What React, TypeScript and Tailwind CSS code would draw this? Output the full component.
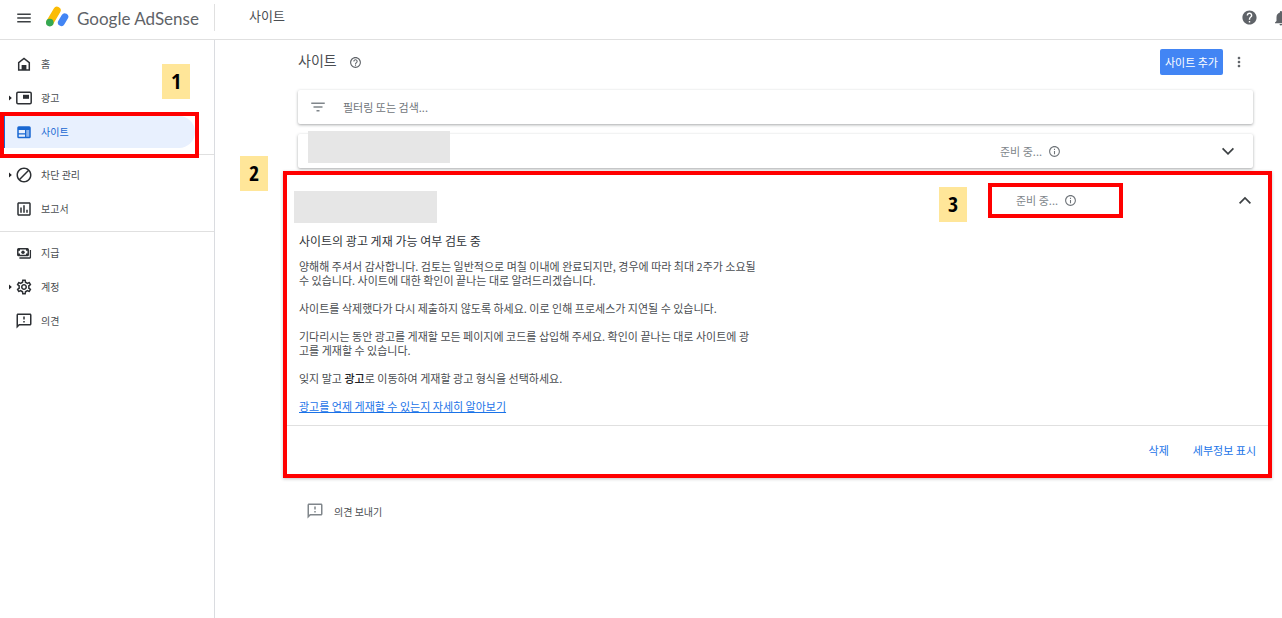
import type { ReactNode } from "react";
import {
  MdBlock,
  MdFilterList,
  MdHelp,
  MdHelpOutline,
  MdMenu,
  MdMoreVert,
  MdNotifications,
  MdOutlineFeedback,
  MdOutlineInfo,
  MdOutlineInsertChart,
  MdOutlineSettings,
} from "react-icons/md";

function HomeIcon() {
  return (
    <svg viewBox="0 0 16 16" className="size-4" fill="none" stroke="currentColor" strokeWidth="1.5">
      <path d="M2.7 14V6.6L8 2.4l5.3 4.2V14z" />
      <path d="M5.6 9h4.8v5H5.6z" fill="currentColor" stroke="none" />
    </svg>
  );
}

function AdsIcon() {
  return (
    <svg viewBox="0 0 16 14" className="h-3.5 w-4" fill="none">
      <rect x="0.8" y="1.3" width="14.4" height="11.4" rx="1.2" stroke="currentColor" strokeWidth="1.5" />
      <rect x="7" y="3.8" width="6" height="4" fill="currentColor" />
    </svg>
  );
}

function SitesIcon() {
  return (
    <svg viewBox="0 0 16 16" className="size-4" fill="none">
      <rect x="2" y="2.9" width="12" height="10.6" rx="0.8" stroke="currentColor" strokeWidth="1.5" />
      <path d="M2 3h12v3H2zM2 9.2h7.5v1.2H2zM9 6h1.4v7H9z" fill="currentColor" />
      <path d="M10.4 6H14v7h-3.6z" fill="currentColor" opacity="0.45" />
    </svg>
  );
}

function PaymentsIcon() {
  return (
    <svg viewBox="0 0 16 16" className="size-4" fill="none" stroke="currentColor">
      <rect x="1.8" y="3.8" width="10.4" height="6.8" rx="0.8" strokeWidth="1.5" />
      <circle cx="7" cy="7.2" r="1.7" fill="currentColor" stroke="none" />
      <path d="M2 3.8h2v2H2zM10 3.8h2v2h-2zM2 8.6h2v2H2zM10 8.6h2v2h-2z" fill="currentColor" stroke="none" />
      <path d="M14.4 5v7.6q0 .4-.4.4H3.4" strokeWidth="1.3" />
    </svg>
  );
}

function Chevron({ up }: { up?: boolean }) {
  return (
    <svg viewBox="0 0 14 14" className="size-3.5" fill="none" stroke="currentColor" strokeWidth="1.7">
      <path d={up ? "M1.6 10.3 7 4.9l5.4 5.4" : "M1.6 4.4 7 9.8l5.4-5.4"} />
    </svg>
  );
}

function Logo() {
  return (
    <svg viewBox="0 0 24 22" className="h-[22px] w-6" aria-hidden="true">
      <path d="M5 16.2 12 4.4" stroke="#fbbc04" strokeWidth="7.4" strokeLinecap="round" />
      <circle cx="4.8" cy="16.6" r="3.8" fill="#34a853" />
      <path d="M16.4 16.6 19.8 10.8" stroke="#4285f4" strokeWidth="7" strokeLinecap="round" />
    </svg>
  );
}

type NavItem = { label: string; icon: ReactNode; expandable?: boolean; active?: boolean };

const sections: NavItem[][] = [
  [
    { label: "홈", icon: <HomeIcon /> },
    { label: "광고", icon: <AdsIcon />, expandable: true },
    { label: "사이트", icon: <SitesIcon />, active: true },
  ],
  [
    { label: "차단 관리", icon: <MdBlock className="size-[18px] shrink-0" />, expandable: true },
    { label: "보고서", icon: <MdOutlineInsertChart className="size-[18px] shrink-0" /> },
  ],
  [
    { label: "지급", icon: <PaymentsIcon /> },
    { label: "계정", icon: <MdOutlineSettings className="size-[18px] shrink-0" />, expandable: true },
    { label: "의견", icon: <MdOutlineFeedback className="size-[18px] shrink-0" /> },
  ],
];

function NavLink({ item }: { item: NavItem }) {
  return (
    <li className="relative">
      <a
        href="#"
        aria-current={item.active ? "page" : undefined}
        className={
          item.active
            ? "mr-[19px] ml-1 flex h-8 items-center rounded-r-full border-l border-[#1967d2] bg-[#e8f0fe] text-[#1967d2]"
            : "mr-[19px] ml-1 flex h-8 items-center border-l border-transparent text-[#4a4d51]"
        }
      >
        <span className="flex w-[11px] justify-center">
          {item.expandable && (
            <svg viewBox="0 0 3 6" className="h-1.5 w-[3px]" fill="#202124">
              <path d="M0 .6l2.8 2.4-2.8 2.4z" />
            </svg>
          )}
        </span>
        <span className={item.active ? "flex w-4 justify-center" : "flex w-4 justify-center text-[#2d3034]"}>
          {item.icon}
        </span>
        <span className="pb-0.5 pl-[9px] text-[10px]">{item.label}</span>
      </a>
      {item.active && <span className="absolute -top-1 right-[15px] left-0 h-[46px] border-4 border-[#ff0000]" />}
    </li>
  );
}

function Step({ n, className }: { n: number; className: string }) {
  return (
    <span
      className={`absolute flex h-[35px] w-7 items-center justify-center bg-[#ffe699] pb-0.5 font-["Liberation_Sans_Narrow","Open_Sans_Condensed","Liberation_Sans",sans-serif] text-[22px] font-bold text-black ${className}`}
    >
      {n}
    </span>
  );
}

function Status() {
  return (
    <span className="flex items-center gap-1.5 text-[11px] text-[#80868b]">
      준비 중... <MdOutlineInfo className="size-[13px] text-[#70757a]" />
    </span>
  );
}

const card = "rounded-xs bg-white shadow-[0_1px_3px_rgba(60,64,67,0.45)]";

export default function App() {
  return (
    <div className='flex min-h-screen flex-col overflow-x-hidden bg-white font-["Noto_Sans_CJK_KR",sans-serif] text-[#4a4d51]'>
      <header className="flex h-10 items-center border-b border-[#e0e0e0]">
        <div className="mb-1 flex h-[27px] w-[215px] shrink-0 items-center border-r border-[#e0e0e0] pl-[15px]">
          <button aria-label="메뉴" className="text-[#3c4043]">
            <MdMenu className="size-[18px]" />
          </button>
          <a href="#" className="flex items-center gap-2 pl-3 text-[#5f6368]">
            <span className="pb-0.5">
              <Logo />
            </span>
            <span className='pt-0.5 font-["Lato",sans-serif] text-[17px] whitespace-nowrap'>Google AdSense</span>
          </a>
        </div>
        <h1 className="grow pb-2 pl-[34px] text-[13px]">사이트</h1>
        <div className="-mr-2 flex items-center gap-3.5 pb-1 text-[#5f6368]">
          <button aria-label="도움말">
            <MdHelp className="size-[17px]" />
          </button>
          <button aria-label="알림">
            <MdNotifications className="size-[18px]" />
          </button>
        </div>
      </header>

      <div className="flex grow">
        <nav className="relative w-[215px] shrink-0 border-r border-[#dadce0] pt-1">
          {sections.map((items, i) => (
            <ul
              key={i}
              className="flex flex-col gap-0.5 border-b border-[#e0e0e0] pt-1 pb-1.5 last-of-type:border-b-0 last-of-type:pt-[5px]"
            >
              {items.map((item) => (
                <NavLink key={item.label} item={item} />
              ))}
            </ul>
          ))}
          <Step n={1} className="top-6 left-[162px]" />
        </nav>

        <main className="relative min-w-0 grow pr-2.5 pl-[68px]">
          <div className="mr-[19px] ml-[15px]">
            <div className="flex h-[50px] items-center pb-1.5">
              <h2 className="pb-1 text-[14px]">사이트</h2>
              <button aria-label="사이트 도움말" className="ml-3 text-[#5f6368]">
                <MdHelpOutline className="size-[13px]" />
              </button>
              <button className="ml-auto h-[26px] rounded-xs bg-[#4285f4] px-[5px] text-[11px] text-white">
                사이트 추가
              </button>
              <button aria-label="더보기" className="mr-1.5 ml-2 text-[#5f6368]">
                <MdMoreVert className="size-4" />
              </button>
            </div>
            <label className={`flex h-[34px] items-center pl-[11px] ${card}`}>
              <MdFilterList className="size-[18px] text-[#80868b]" />
              <input
                aria-label="필터링 또는 검색"
                placeholder="필터링 또는 검색..."
                className="ml-4 grow text-[11px] outline-none placeholder:text-[#70757a]"
              />
            </label>
            <div className={`mt-2.5 flex h-[34px] items-center pl-2.5 ${card}`}>
              <span className="mb-2 h-8 w-[142px] bg-[#e6e6e6]" />
              <span className="ml-auto w-[221px]">
                <Status />
              </span>
              <button aria-label="펼치기" className="mr-[18px] text-[#3c4043]">
                <Chevron />
              </button>
            </div>
          </div>

          <section className="mt-[3px] border-4 border-[#ff0000] shadow-[0_1px_3px_rgba(60,64,67,0.3)]">
            <div className="flex h-[50px] items-center pl-[7px]">
              <span className="mt-3.5 h-8 w-[143px] bg-[#e6e6e6]" />
              <span className="ml-auto flex h-[35px] w-[135px] items-center border-4 border-[#ff0000] pl-6">
                <Status />
              </span>
              <button aria-label="접기" className="mr-4 ml-[115px] text-[#3c4043]">
                <Chevron up />
              </button>
            </div>
            <div className="flex max-w-[484px] flex-col gap-3.5 px-3 pb-3 text-[11px] leading-[14px]">
              <h3 className="mt-[7px] -mb-[5px] text-[12px] leading-[18px] text-[#303338]">
                사이트의 광고 게재 가능 여부 검토 중
              </h3>
              <p>
                양해해 주셔서 감사합니다. 검토는 일반적으로 며칠 이내에 완료되지만, 경우에 따라 최대 2주가 소요될 수
                있습니다. 사이트에 대한 확인이 끝나는 대로 알려드리겠습니다.
              </p>
              <p>사이트를 삭제했다가 다시 제출하지 않도록 하세요. 이로 인해 프로세스가 지연될 수 있습니다.</p>
              <p>
                기다리시는 동안 광고를 게재할 모든 페이지에 코드를 삽입해 주세요. 확인이 끝나는 대로 사이트에 광고를
                게재할 수 있습니다.
              </p>
              <p>
                잊지 말고 <strong className="font-medium text-[#202124]">광고</strong>로 이동하여 게재할 광고 형식을
                선택하세요.
              </p>
              <p>
                <a href="#" className="text-[#1a73e8] underline">
                  광고를 언제 게재할 수 있는지 자세히 알아보기
                </a>
              </p>
            </div>
            <div className="flex h-[49px] items-center justify-end gap-6 border-t border-[#e0e0e0] pr-3 text-[11px] text-[#1a73e8]">
              <button>삭제</button>
              <button>세부정보 표시</button>
            </div>
          </section>

          <button className="mt-6 ml-[23px] flex items-center gap-2.5 text-[10px]">
            <MdOutlineFeedback className="size-[18px] text-[#80868b]" />
            의견 보내기
          </button>

          <Step n={2} className="top-[116px] left-[25px]" />
          <Step n={3} className="top-[147px] right-[315px]" />
        </main>
      </div>
    </div>
  );
}
